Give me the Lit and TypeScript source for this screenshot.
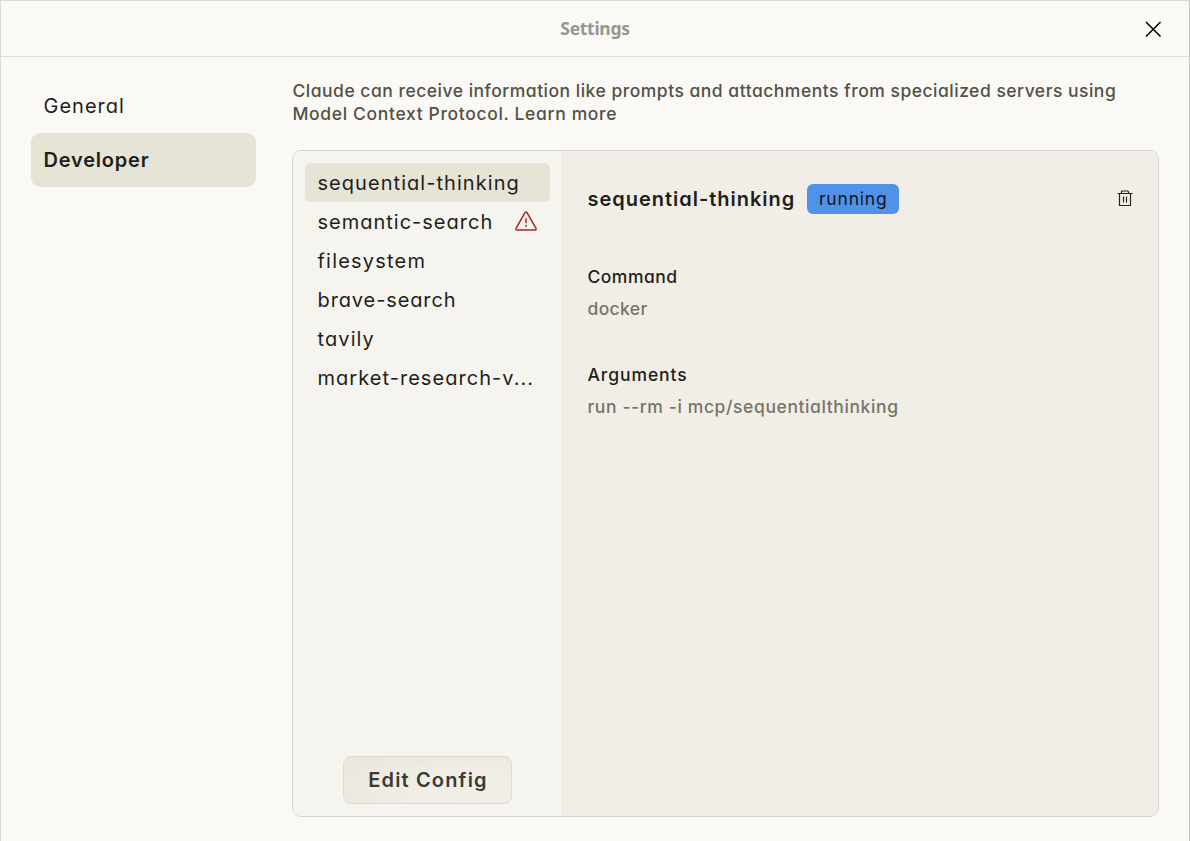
import { LitElement, html, css, svg, nothing } from "lit";
import { customElement, state } from "lit/decorators.js";
import { classMap } from "lit/directives/class-map.js";
import { styleMap } from "lit/directives/style-map.js";

interface Server {
  name: string;
  label?: string;
  tracking: number;
  failed?: boolean;
}

const SERVERS: Server[] = [
  { name: "sequential-thinking", tracking: 1.05 },
  { name: "semantic-search", tracking: 1.0, failed: true },
  { name: "filesystem", tracking: 1.2 },
  { name: "brave-search", tracking: 0.89 },
  { name: "tavily", tracking: 1.1 },
  { name: "market-research-v", label: "market-research-v...", tracking: 1.04 },
];

const closeIcon = html`<svg class="close" width="18" height="18" viewBox="0 0 18 18" fill="none" stroke="#000" stroke-width="1.5">
  ${svg`<path d="M2 2 16.500 16.500M16.500 2 2 16.500"/>`}
</svg>`;

const warningIcon = html`<svg class="warning" width="24" height="24" viewBox="0 0 24 24" fill="none" stroke="#a8281f" stroke-width="1.5" stroke-linejoin="round">
  ${svg`<path d="M11 2.600Q12 1.200 13 2.600L22 18.300Q22.400 19.900 21 20H3Q1.600 19.900 2 18.300Z"/><path d="M12 8.300V13.200M12 14.800V16.700"/>`}
</svg>`;

const trashIcon = html`<svg class="trash" width="16" height="18" viewBox="0 0 16 18" fill="none" stroke="#29261b" stroke-width="1.200">
  ${svg`<path d="M.5 3.500H15.500M2.500 3.500V15.500H13.500V3.500M4.500 3.300V2Q4.500 1 5.500 1H10.500Q11.500 1 11.500 2V3.300M6.500 6.500V12.500M9.500 6.500V12.500"/>`}
</svg>`;

@customElement("app-root")
export class AppRoot extends LitElement {
  @state() private selected = "sequential-thinking";

  static styles = css`
    :host {
      display: flex;
      flex-direction: column;
      position: relative;
      box-sizing: border-box;
      width: 1190px;
      height: 841px;
      overflow: hidden;
      background: #faf9f5;
      border: solid #dbdad6;
      border-width: 1px 1px 0 1px;
      border-right-color: #c4c4c2;
      color: #1f1e1a;
      font-family: Inter, "Noto Sans", sans-serif;
      font-feature-settings: "cv11", "calt" 0;
      font-size: 20px;
      letter-spacing: 0.7px;
    }
    * { box-sizing: border-box; }
    .titlebar {
      height: 56px;
      flex: none;
      display: grid;
      grid-template-columns: 1fr auto 1fr;
      align-items: center;
      border-bottom: 1px solid #dddcd8;
    }
    .title {
      grid-column: 2;
      font: 700 17.500px/24px "Noto Sans", sans-serif;
      letter-spacing: -0.3px;
      padding-bottom: 2px;
      color: #969590;
    }
    .close { justify-self: end; margin-right: 27px; display: block; }
    .body { display: flex; flex: 1; min-height: 0; }
    .nav { width: 225px; margin: 22px 36px 0 30px; flex: none; }
    .tab { height: 54px; padding: 0 12.500px; line-height: 54px; border-radius: 9px; letter-spacing: 1px; }
    .tab.active { background: #e6e4d7; font-weight: 600; letter-spacing: 0.8px; }
    .content { width: 867px; padding-top: 22px; display: flex; flex-direction: column; }
    .intro { margin: 0; padding-left: 0.5px; font-size: 17.500px; font-weight: 450; line-height: 23px; color: #535146; height: 71px; white-space: nowrap; }
    .line1 { letter-spacing: 0.5px; }
    .line2 { letter-spacing: 0.65px; }
    .panel { height: 667px; display: flex; border: 1px solid #d6d5cb; border-radius: 9px; overflow: hidden; }
    .servers { width: 270px; flex: none; padding: 12px; display: flex; flex-direction: column; background: #f5f4ef; border-right: 1px solid #e8e6dc; }
    .server { height: 39px; padding: 0 12px 0 12.500px; display: flex; justify-content: space-between; align-items: center; border-radius: 6px; white-space: nowrap; }
    .server.active { background: #e6e4d7; }
    .edit {
      margin: auto auto 0 38px;
      width: 169px;
      height: 48px;
      border: 1px solid #dddbcc;
      border-radius: 8px;
      background: radial-gradient(ellipse at 75% 65%, #f0eee7 30%, #e8e6d9 105%);
      color: #3d3a32;
      font: inherit;
      font-weight: 600;
      letter-spacing: 1.15px;
      padding: 0 0 0 1px;
    }
    .detail { flex: 1; background: #f0eee6; padding: 33px 25px 0 24.500px; }
    .head { display: flex; align-items: center; height: 30px; margin-bottom: 51px; }
    .name { font-weight: 600; letter-spacing: 0.98px; }
    .badge { margin-left: 12px; width: 92px; height: 30px; line-height: 30px; text-align: center; border-radius: 6px; background: #4f92e8; color: #14141c; font-size: 17.500px; letter-spacing: 0.8px; }
    .trash { margin-left: auto; }
    .label, .value { font-size: 17.500px; font-weight: 450; line-height: 24px; }
    .label { margin-bottom: 8px; }
    .value { margin-bottom: 42px; color: #777468; }
    .t-command { letter-spacing: 0.48px; }
    .t-docker { letter-spacing: 0.35px; }
    .t-arguments { letter-spacing: 0.93px; }
    .t-args { letter-spacing: 0.6px; }
    svg { display: block; flex: none; }
    .edge { position: absolute; top: 0; right: -1px; }
  `;

  render() {
    return html`
      <header class="titlebar"><div class="title">Settings</div>${closeIcon}</header>
      <div class="body">
        <nav class="nav">
          <div class="tab">General</div>
          <div class="tab active">Developer</div>
        </nav>
        <main class="content">
          <p class="intro">
            <span class="line1">Claude can receive information like prompts and attachments from specialized servers using</span><br />
            <span class="line2">Model Context Protocol. Learn more</span>
          </p>
          <section class="panel">
            <div class="servers">
              ${SERVERS.map(
                (s) => html`<div
                  class=${classMap({ server: true, active: s.name === this.selected })}
                  @click=${() => (this.selected = s.name)}
                ><span style=${styleMap({ letterSpacing: `${s.tracking}px` })}>${s.label ?? s.name}</span>${s.failed ? warningIcon : nothing}</div>`
              )}
              <button class="edit">Edit Config</button>
            </div>
            <div class="detail">
              <div class="head">
                <span class="name">sequential-thinking</span>
                <span class="badge">running</span>
                ${trashIcon}
              </div>
              <div class="label t-command">Command</div>
              <div class="value t-docker">docker</div>
              <div class="label t-arguments">Arguments</div>
              <div class="value t-args">run --rm -i mcp/sequentialthinking</div>
            </div>
          </section>
        </main>
      </div>
      <svg class="edge" width="1" height="840" viewBox="0 1 1 840" fill="#77776f">
        ${[213, 220, 417, 421, 426, 478, 481, 486, 510, 515].map((y) => svg`<rect x="0" y=${y} width="1" height="1.500"/>`)}
      </svg>
    `;
  }
}
